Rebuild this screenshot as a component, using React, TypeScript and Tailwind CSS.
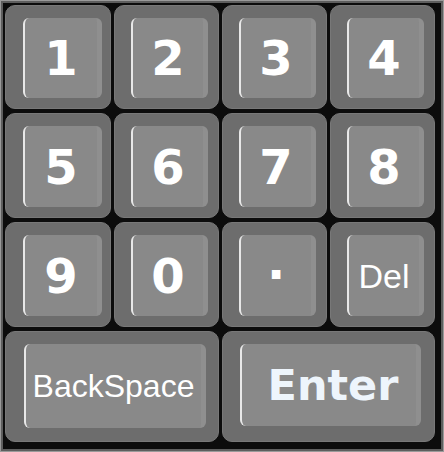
import React from "react";

type KeyProps = {
  label: string;
  kind?: "digit" | "text" | "enter" | "dot" | "del";
  className?: string;
};

const Key = ({ label, kind = "digit", className = "" }: KeyProps) => {
  let textCls = "text-[48px] font-bold text-white";
  if (kind === "text") textCls = "text-[32px] font-normal text-white";
  if (kind === "del") textCls = "text-[34px] font-normal text-white";
  if (kind === "enter") textCls = "text-[43px] font-bold text-[#eef5fc] translate-x-[4px]";
  if (kind === "dot") textCls = "text-[48px] font-bold text-white -translate-y-[14px]";

  return (
    <div
      className={`rounded-[10px] bg-[#6d6d6d] border border-[#787878] flex ${className}`}
    >
      <div className="flex-1 rounded-[6px] bg-[#898989] border-l-2 border-[#e8e8e8] border-r-[5px] border-r-[#8f8f8f] flex items-center justify-center">
        <span className={`leading-none ${textCls}`}>{label}</span>
      </div>
    </div>
  );
};

const App = () => {
  return (
    <div className="w-[444px] h-[452px] bg-[#5e5e5e] border border-[#9a9a9a] p-[2px]">
      <div
        className="w-full h-full bg-[#0c0c0c] p-[2px] grid grid-cols-[106px_105px_105px_105px] grid-rows-[104px_105px_105px_111px] gap-x-[3px] gap-y-[4px]"
        style={{ fontFamily: '"DejaVu Sans", Verdana, sans-serif' }}
      >
        <Key label="1" className="pt-[12px] pb-[10px] pl-[17px] pr-[8px]" />
        <Key label="2" className="pt-[12px] pb-[10px] pl-[16px] pr-[10px]" />
        <Key label="3" className="pt-[12px] pb-[10px] pl-[16px] pr-[10px]" />
        <Key label="4" className="pt-[12px] pb-[10px] pl-[16px] pr-[10px]" />

        <Key label="5" className="pt-[12px] pb-[10px] pl-[17px] pr-[8px]" />
        <Key label="6" className="pt-[12px] pb-[10px] pl-[16px] pr-[10px]" />
        <Key label="7" className="pt-[12px] pb-[10px] pl-[16px] pr-[10px]" />
        <Key label="8" className="pt-[12px] pb-[10px] pl-[16px] pr-[10px]" />

        <Key label="9" className="pt-[12px] pb-[10px] pl-[17px] pr-[8px]" />
        <Key label="0" className="pt-[12px] pb-[10px] pl-[16px] pr-[10px]" />
        <Key label="." kind="dot" className="pt-[12px] pb-[10px] pl-[16px] pr-[10px]" />
        <Key label="Del" kind="del" className="pt-[12px] pb-[10px] pl-[16px] pr-[10px] [font-family:'Liberation_Sans',Arial,sans-serif]" />

        <Key
          label="BackSpace"
          kind="text"
          className="col-span-2 pt-[12px] pb-[13px] pl-[18px] pr-[12px] [font-family:'Liberation_Sans',Arial,sans-serif]"
        />
        <Key
          label="Enter"
          kind="enter"
          className="col-span-2 pt-[12px] pb-[15px] pl-[17px] pr-[13px]"
        />
      </div>
    </div>
  );
};

export default App;
